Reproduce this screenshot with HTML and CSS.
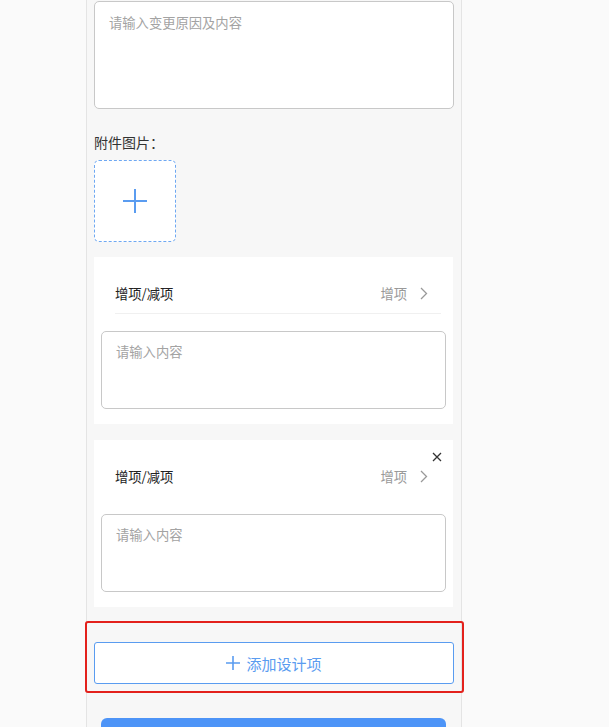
FILE: index.html
```html
<!DOCTYPE html>
<html lang="zh-CN">
<head>
<meta charset="utf-8">
<title>设计变更</title>
<link rel="stylesheet" href="styles.css">
</head>
<body>
<div class="page">
  <div class="textarea big">请输入变更原因及内容</div>

  <div class="label">附件图片：</div>
  <div class="upload">
    <svg width="24" height="24" viewBox="0 0 24 24"><path d="M12 0V24M0 12H24" stroke="#5a9cf0" stroke-width="2" fill="none"/></svg>
  </div>

  <div class="card">
    <div class="row">
      <span class="row-label">增项/减项</span>
      <span class="row-value">增项
        <svg class="chev" width="8" height="13" viewBox="0 0 8 13"><path d="M1 1L6.5 6.5L1 12" stroke="#999" stroke-width="1.3" fill="none"/></svg>
      </span>
    </div>
    <div class="textarea small">请输入内容</div>
  </div>

  <div class="card">
    <svg class="close" width="10" height="10" viewBox="0 0 10 10"><path d="M1 1L9 9M9 1L1 9" stroke="#333" stroke-width="1.3" fill="none"/></svg>
    <div class="row no-line">
      <span class="row-label">增项/减项</span>
      <span class="row-value">增项
        <svg class="chev" width="8" height="13" viewBox="0 0 8 13"><path d="M1 1L6.5 6.5L1 12" stroke="#999" stroke-width="1.3" fill="none"/></svg>
      </span>
    </div>
    <div class="textarea small">请输入内容</div>
  </div>

  <div class="highlight">
    <div class="add-btn">
      <svg width="14" height="14" viewBox="0 0 14 14"><path d="M7 0V14M0 7H14" stroke="#5a9cf0" stroke-width="1.6" fill="none"/></svg>
      <span>添加设计项</span>
    </div>
  </div>

  <div class="submit"></div>
</div>
</body>
</html>
```

FILE: styles.css
```css
* { box-sizing: border-box; }
html, body {
  margin: 0;
  padding: 0;
  background: #fafafa;
  font-family: "Noto Sans CJK SC", "Noto Sans", sans-serif;
  overflow: hidden;
}
.page {
  margin-left: 86px;
  width: 376px;
  min-height: 100vh;
  background: #f7f7f7;
  border-left: 1px solid #e4e4e4;
  border-right: 1px solid #e4e4e4;
  padding: 1px 7px 0 7px;
  display: flex;
  flex-direction: column;
}
.textarea {
  background: #fff;
  border: 1px solid #c8c8c8;
  border-radius: 5px;
  color: #a3a3a3;
  font-size: 13.3px;
  line-height: 18px;
}
.textarea.big {
  width: 360px;
  height: 108px;
  padding: 12px 14px;
}
.label {
  margin-top: 23px;
  font-size: 14px;
  line-height: 20px;
  color: #333;
}
.upload {
  margin-top: 8px;
  width: 82px;
  height: 82px;
  border: 1px dashed #6ea8f2;
  border-radius: 5px;
  background: #fff;
  display: flex;
  align-items: center;
  justify-content: center;
}
.card {
  position: relative;
  margin-top: 15px;
  width: 359px;
  background: #fff;
  padding: 18px 7px 15px 7px;
  display: flex;
  flex-direction: column;
}
.card + .card { margin-top: 16px; }
.row {
  margin: 0 5px 0 14px;
  height: 39px;
  border-bottom: 1px solid #f0f0f0;
  display: flex;
  align-items: center;
  justify-content: space-between;
  padding-right: 13px;
  padding-bottom: 1px;
}
.row.no-line { border-bottom-color: transparent; }
.row-label {
  font-size: 13.3px;
  color: #222;
}
.row-value {
  font-size: 13.3px;
  color: #999;
  display: flex;
  align-items: center;
  gap: 13px;
}
.chev { display: block; }
.close {
  position: absolute;
  top: 12px;
  right: 11px;
}
.textarea.small {
  margin-top: 17px;
  height: 78px;
  padding: 11px 14px;
}
.highlight {
  margin: 14px -10px 0 -9px;
  border: 2px solid #e3211c;
  border-radius: 3px;
  padding: 19px 8px 7px 7px;
}
.add-btn {
  width: 360px;
  height: 42px;
  background: #fff;
  border: 1px solid #5a9cf0;
  border-radius: 3px;
  color: #5a9cf0;
  font-size: 15px;
  display: flex;
  align-items: center;
  justify-content: center;
  gap: 6px;
}
.submit {
  margin: 25px 8px 0 7px;
  height: 44px;
  flex-shrink: 0;
  background: #4d94f7;
  border-radius: 6px;
}
```
